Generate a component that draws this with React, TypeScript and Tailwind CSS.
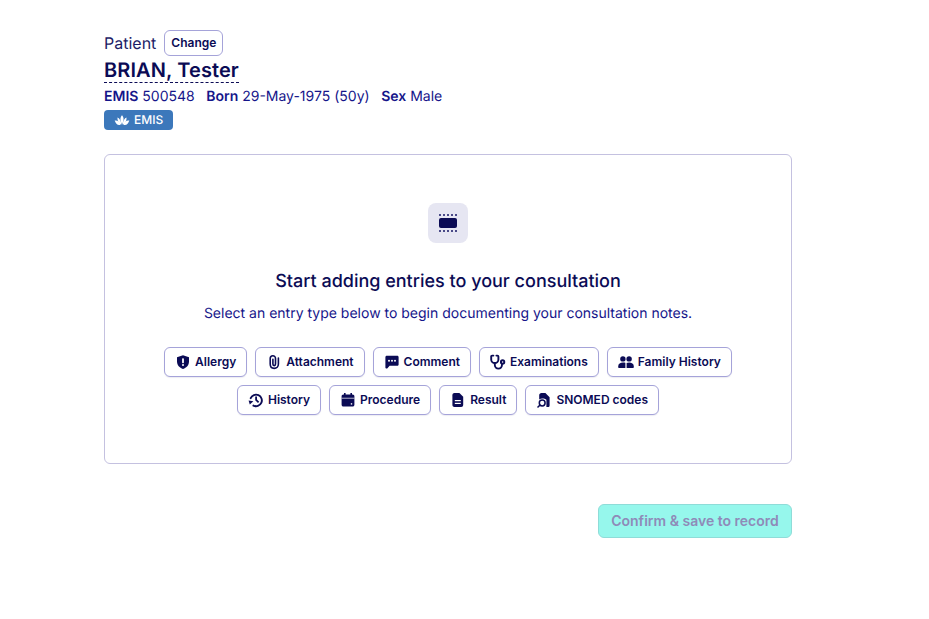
import type { ReactNode } from "react";

function Icon({ children }: { children: ReactNode }) {
  return (
    <svg viewBox="0 0 16 16" className="w-4 h-4" fill="currentColor">
      {children}
    </svg>
  );
}

function Shield() {
  return (
    <Icon>
      <path d="M8 1.2L14 3.3V7.6C14 11.2 11.5 13.9 8 15C4.5 13.9 2 11.2 2 7.6V3.3L8 1.2z" />
      <rect x="7.1" y="4.2" width="1.8" height="5" rx="0.7" fill="#fff" />
      <circle cx="8" cy="11" r="1" fill="#fff" />
    </Icon>
  );
}

function Clip() {
  return (
    <Icon>
      <path
        d="M6.9 5.4V10C6.9 11 7.4 11.6 8.2 11.6S9.5 11 9.5 10V4.4C9.5 2.8 8.3 1.7 6.9 1.7S4.2 2.8 4.2 4.4V10C4.2 12.6 5.9 14.4 8.2 14.4S12.4 12.6 12.4 10V4"
        fill="none"
        stroke="currentColor"
        strokeWidth="1.6"
        strokeLinecap="round"
      />
    </Icon>
  );
}

function Bubble() {
  return (
    <Icon>
      <path d="M2.8 1.8H13.2C14 1.8 14.6 2.4 14.6 3.2V10.4C14.6 11.2 14 11.8 13.2 11.8H5.6L3.2 14.4C2.6 14.8 1.4 14.6 1.4 13.6V3.2C1.4 2.4 2 1.8 2.8 1.8z" />
      <circle cx="5" cy="6.8" r="1" fill="#fff" />
      <circle cx="8" cy="6.8" r="1" fill="#fff" />
      <circle cx="11" cy="6.8" r="1" fill="#fff" />
    </Icon>
  );
}

function Stethoscope() {
  return (
    <Icon>
      <g fill="none" stroke="currentColor" strokeWidth="1.9" strokeLinecap="round">
        <path d="M3.4 1.6H2.2C1.6 1.6 1.2 2 1.2 2.6V5.4C1.2 7.5 2.9 9 4.8 9S8.4 7.5 8.4 5.4V2.6C8.4 2 8 1.6 7.4 1.6H6.4" />
        <path d="M4.8 9V10.8C4.8 12.9 6.4 14.6 8.4 14.6S12 12.9 12 10.8V10.4" />
        <circle cx="12.6" cy="8" r="1.7" />
      </g>
    </Icon>
  );
}

function People() {
  return (
    <Icon>
      <circle cx="4.9" cy="4.9" r="2.7" />
      <circle cx="11.1" cy="4.9" r="2.7" />
      <path d="M0.2 12.2C0.2 10 2.4 8.6 4.9 8.6S7.4 9.1 7.4 9.1V14H1.2C0.6 14 0.2 13.6 0.2 13V12.2z" />
      <path d="M8.6 9.1C9.2 8.8 10 8.6 11.1 8.6C13.6 8.6 15.8 10 15.8 12.2V13C15.8 13.6 15.4 14 14.8 14H8.6V9.1z" />
    </Icon>
  );
}

function History() {
  return (
    <Icon>
      <path
        d="M5.4 13.6A5.8 5.8 0 1 0 2.7 6.2"
        fill="none"
        stroke="currentColor"
        strokeWidth="1.9"
        strokeLinecap="round"
      />
      <path d="M0.6 8.6L5.4 9.2L1.8 12.6z" />
      <path d="M7.2 4.4H9V7.6L11.2 9.8L10 11L7.2 8.3z" />
    </Icon>
  );
}

function Calendar() {
  return (
    <Icon>
      <path d="M4 1h1.6v1.4h4.8V1H12v1.4h.6c1 0 1.8.8 1.8 1.8v8.6c0 1-.8 1.8-1.8 1.8H3.4c-1 0-1.8-.8-1.8-1.8V4.2c0-1 .8-1.8 1.8-1.8H4V1z" />
      <rect x="1.6" y="5.8" width="12.8" height="0.7" fill="#fff" />
      <rect x="10.8" y="11.2" width="1.4" height="1.4" fill="#fff" />
    </Icon>
  );
}

function Doc() {
  return (
    <Icon>
      <path d="M4.4 1H9.4L13.2 4.8V13C13.2 14.1 12.3 15 11.2 15H4.4C3.3 15 2.4 14.1 2.4 13V3C2.4 1.9 3.3 1 4.4 1z" />
      <rect x="4.8" y="8" width="6" height="1.2" fill="#fff" />
      <rect x="4.8" y="10.8" width="6" height="1.2" fill="#fff" />
    </Icon>
  );
}

function Snomed() {
  return (
    <Icon>
      <path d="M5.4 1H9.4L13.6 5.2V13.4C13.6 14.3 12.9 15 12 15H10.4V7.8C9.4 7 8 6.6 6.4 6.6C5.2 6.6 4 7 3.2 7.6V3.2C3.2 2 4.2 1 5.4 1z" />
      <circle cx="6.2" cy="11" r="2.9" fill="none" stroke="currentColor" strokeWidth="1.5" />
      <path d="M3.8 13.2L2 15" stroke="currentColor" strokeWidth="1.6" strokeLinecap="round" />
    </Icon>
  );
}

function Lotus() {
  return (
    <svg viewBox="0 0 16 12" className="w-[16px] h-[11px]" fill="currentColor">
      <path d="M8 0.4C10 2.8 10.6 5.6 8 10.4C5.4 5.6 6 2.8 8 0.4z" />
      <path d="M3 2.8C5.2 3.6 6.6 5.8 7.4 10.4C4.6 9.8 3 7 3 2.8z" />
      <path d="M13 2.8C10.8 3.6 9.4 5.8 8.6 10.4C11.4 9.8 13 7 13 2.8z" />
      <path d="M0 6C2.6 5.4 5 7 6.6 10.6C3.4 11.8 1.2 9.6 0 6z" />
      <path d="M16 6C13.4 5.4 11 7 9.4 10.6C12.6 11.8 14.8 9.6 16 6z" />
    </svg>
  );
}

function EntryButton({ icon, label }: { icon: ReactNode; label: string }) {
  return (
    <button className="h-[30px] flex items-center gap-1 px-[10px] rounded-[6px] border border-[#a5a3d9] bg-white text-[12px] font-semibold text-[#0b0b55] shadow-[0_1px_1px_rgba(20,20,90,0.08)]">
      {icon}
      {label}
    </button>
  );
}

export default function App() {
  return (
    <div className="min-h-[619px] bg-white pl-[104px] pt-[30px] font-['Inter',sans-serif] text-[#15158a] [text-rendering:geometricPrecision]">
      <div className="w-[688px]">
        <div className="flex items-center gap-2 h-[26px]">
          <span className="text-[16px] text-[#1c1c66]">Patient</span>
          <button className="h-[26px] px-[6px] rounded-[6px] border border-[#a5a3d9] text-[12px] font-semibold text-[#0b0b55]">
            Change
          </button>
        </div>
        <div className="mt-[2px] h-[26px]">
          <span className="inline-block text-[20px] leading-[24px] font-semibold tracking-[0.1px] text-[#0b0b55] border-b border-dashed border-[#0b0b55]">
            BRIAN, Tester
          </span>
        </div>
        <div className="mt-[3px] flex gap-[11.5px] text-[14px] leading-[20px]">
          <span><b className="font-semibold">EMIS</b> 500548</span>
          <span><b className="font-semibold">Born</b> 29-May-1975 (50y)</span>
          <span><b className="font-semibold">Sex</b> Male</span>
        </div>
        <div className="mt-[3px] inline-flex items-center gap-[4px] h-5 px-[10px] rounded-[4px] bg-[#3c78bb] text-white text-[12px] font-medium">
          <Lotus />
          EMIS
        </div>

        <div className="mt-[22px] h-[310px] rounded-[6px] border border-[#c4c1e0] flex flex-col items-center pt-[48px]">
          <div className="w-10 h-10 rounded-[8px] bg-[#e6e6f2] flex flex-col items-center justify-center">
            <div className="w-[18px] border-t-2 border-dotted border-[#4a4a88]" />
            <div className="w-[18px] h-[10px] my-[2px] rounded-[2px] bg-[#0b0b55]" />
            <div className="w-[18px] border-t-2 border-dotted border-[#4a4a88]" />
          </div>
          <h2 className="mt-[25px] text-[18px] leading-[28px] font-medium text-[#0b0b55]">
            Start adding entries to your consultation
          </h2>
          <p className="mt-[8px] text-[14px] leading-[20px]">
            Select an entry type below to begin documenting your consultation notes.
          </p>
          <div className="mt-[23px] flex flex-wrap justify-center gap-2 w-[600px]">
            <EntryButton icon={<Shield />} label="Allergy" />
            <EntryButton icon={<Clip />} label="Attachment" />
            <EntryButton icon={<Bubble />} label="Comment" />
            <EntryButton icon={<Stethoscope />} label="Examinations" />
            <EntryButton icon={<People />} label="Family History" />
            <EntryButton icon={<History />} label="History" />
            <EntryButton icon={<Calendar />} label="Procedure" />
            <EntryButton icon={<Doc />} label="Result" />
            <EntryButton icon={<Snomed />} label="SNOMED codes" />
          </div>
        </div>

        <div className="mt-[40px] flex justify-end">
          <button className="h-[34px] w-[194px] rounded-[6px] border border-[#8fdcd8] bg-[#96f7ec] text-[14px] font-semibold text-[#8f8ab8]">
            Confirm &amp; save to record
          </button>
        </div>
      </div>
    </div>
  );
}
